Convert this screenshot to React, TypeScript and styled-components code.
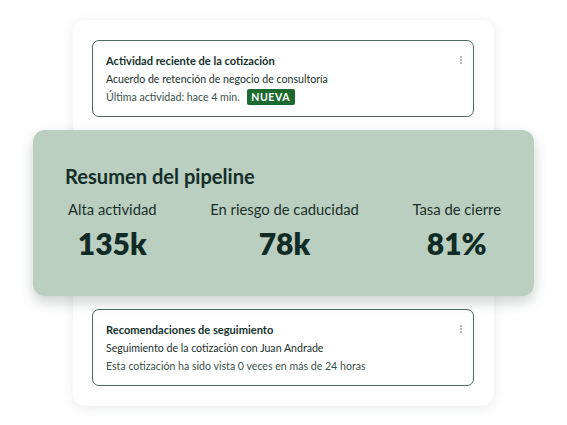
import React from 'react';
import styled, { createGlobalStyle } from 'styled-components';

const GlobalStyle = createGlobalStyle`
  html, body {
    margin: 0;
    padding: 0;
    background: #ffffff;
  }
  body {
    font-family: 'Lato', 'Noto Sans', sans-serif;
    color: #1c2f2c;
  }
`;

const Stage = styled.div`
  width: 567px;
  height: 425px;
  padding: 20px 0 0 73px;
  box-sizing: border-box;
`;

const Sheet = styled.div`
  width: 421px;
  box-sizing: border-box;
  padding: 20px 20px 20px 19px;
  display: flex;
  flex-direction: column;
  gap: 13px;
  background: #fff;
  border-radius: 12px;
  box-shadow: 0 2px 12px rgba(30, 50, 45, 0.1);
`;

const Card = styled.div`
  position: relative;
  height: 77px;
  box-sizing: border-box;
  padding: 11px 13px 0;
  border: 1px solid #4f6661;
  border-radius: 7px;
  display: flex;
  flex-direction: column;
`;

const CardTitle = styled.div`
  font-size: 11.1px;
  font-weight: 700;
  line-height: 18px;
  color: #14302a;
`;

const CardLine = styled.div<{ $muted?: boolean }>`
  font-size: 10.6px;
  line-height: 18px;
  display: flex;
  align-items: center;
  gap: 7px;
  color: ${p => (p.$muted ? '#3c4f4b' : '#1c2f2c')};
`;

const Badge = styled.span`
  display: inline-flex;
  align-items: center;
  justify-content: center;
  width: 48px;
  height: 16px;
  border-radius: 2px;
  background: #1c6a2d;
  color: #fff;
  font-size: 10.5px;
  font-weight: 700;
  letter-spacing: 0.6px;
`;

const Kebab = styled.div`
  position: absolute;
  top: 15px;
  right: 11px;
  display: flex;
  flex-direction: column;
  gap: 1px;

  span {
    width: 2px;
    height: 2px;
    border-radius: 50%;
    background: #9aa6a3;
  }
`;

const Pipeline = styled.div`
  margin: 0 -60px 0 -59px;
  height: 166px;
  box-sizing: border-box;
  padding: 34px 32px 0;
  background: #bacfbf;
  border-radius: 12px;
  box-shadow: 0 6px 14px rgba(20, 45, 35, 0.22);
`;

const PipelineTitle = styled.div`
  font-size: 20.1px;
  font-weight: 700;
  line-height: 24px;
  color: #142e29;
`;

const Stats = styled.div`
  margin-top: 11px;
  padding: 0 1px 0 3px;
  display: flex;
  justify-content: space-between;
`;

const Stat = styled.div`
  display: flex;
  flex-direction: column;
  align-items: center;
`;

const StatLabel = styled.div`
  font-size: 14.8px;
  line-height: 20px;
  color: #1c2f2c;
`;

const StatValue = styled.div`
  margin-top: 6px;
  font-size: 30px;
  font-weight: 800;
  line-height: 36px;
  color: #112b26;
`;

const Dots = () => (
  <Kebab>
    <span />
    <span />
    <span />
  </Kebab>
);

const stats = [
  { label: 'Alta actividad', value: '135k' },
  { label: 'En riesgo de caducidad', value: '78k' },
  { label: 'Tasa de cierre', value: '81%' },
];

export default function App() {
  return (
    <>
      <GlobalStyle />
      <Stage>
        <Sheet>
          <Card>
            <Dots />
            <CardTitle>Actividad reciente de la cotización</CardTitle>
            <CardLine>Acuerdo de retención de negocio de consultoría</CardLine>
            <CardLine $muted>
              Última actividad: hace 4 min.
              <Badge>NUEVA</Badge>
            </CardLine>
          </Card>
          <Pipeline>
            <PipelineTitle>Resumen del pipeline</PipelineTitle>
            <Stats>
              {stats.map(s => (
                <Stat key={s.label}>
                  <StatLabel>{s.label}</StatLabel>
                  <StatValue>{s.value}</StatValue>
                </Stat>
              ))}
            </Stats>
          </Pipeline>
          <Card>
            <Dots />
            <CardTitle>Recomendaciones de seguimiento</CardTitle>
            <CardLine>Seguimiento de la cotización con Juan Andrade</CardLine>
            <CardLine $muted>Esta cotización ha sido vista 0 veces en más de 24 horas</CardLine>
          </Card>
        </Sheet>
      </Stage>
    </>
  );
}
